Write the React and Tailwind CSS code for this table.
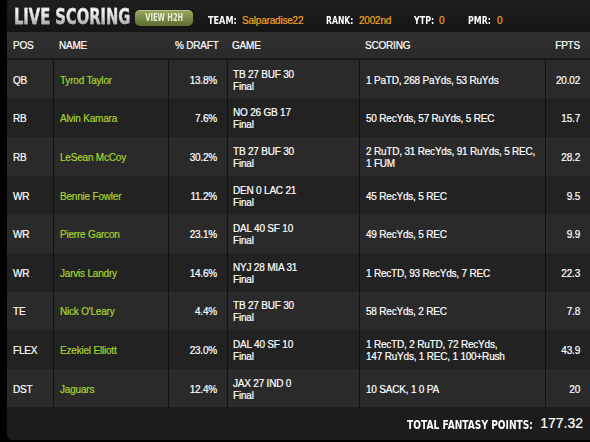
import React from "react";

const rows = [
  { pos: "QB", name: "Tyrod Taylor", draft: "13.8%", game: "TB 27 BUF 30", scoring: ["1 PaTD", "268 PaYds", "53 RuYds"], fpts: "20.02" },
  { pos: "RB", name: "Alvin Kamara", draft: "7.6%", game: "NO 26 GB 17", scoring: ["50 RecYds", "57 RuYds", "5 REC"], fpts: "15.7" },
  { pos: "RB", name: "LeSean McCoy", draft: "30.2%", game: "TB 27 BUF 30", scoring: ["2 RuTD", "31 RecYds", "91 RuYds", "5 REC", "1 FUM"], fpts: "28.2" },
  { pos: "WR", name: "Bennie Fowler", draft: "11.2%", game: "DEN 0 LAC 21", scoring: ["45 RecYds", "5 REC"], fpts: "9.5" },
  { pos: "WR", name: "Pierre Garcon", draft: "23.1%", game: "DAL 40 SF 10", scoring: ["49 RecYds", "5 REC"], fpts: "9.9" },
  { pos: "WR", name: "Jarvis Landry", draft: "14.6%", game: "NYJ 28 MIA 31", scoring: ["1 RecTD", "93 RecYds", "7 REC"], fpts: "22.3" },
  { pos: "TE", name: "Nick O'Leary", draft: "4.4%", game: "TB 27 BUF 30", scoring: ["58 RecYds", "2 REC"], fpts: "7.8" },
  { pos: "FLEX", name: "Ezekiel Elliott", draft: "23.0%", game: "DAL 40 SF 10", scoring: ["1 RecTD", "2 RuTD", "72 RecYds", "147 RuYds", "1 REC", "1 100+Rush"], fpts: "43.9" },
  { pos: "DST", name: "Jaguars", draft: "12.4%", game: "JAX 27 IND 0", scoring: ["10 SACK", "1 0 PA"], fpts: "20" },
];

// heavy condensed look: DejaVu Sans Bold squeezed horizontally
const heavy = "font-['DejaVu_Sans',sans-serif] font-bold whitespace-nowrap";
const cols = "grid grid-cols-[46px_115px_59px_132px_186px_45px]";

const App = () => {
  return (
    <div className="w-[590px] h-[442px] bg-black pl-[7px] pb-[2px] overflow-hidden font-['Liberation_Sans',Arial,sans-serif] tracking-[-0.2px]">
      <div className="h-full flex flex-col rounded-tl-[3px] rounded-bl-[5px] overflow-hidden bg-[#1b1b1b]">
        {/* title bar */}
        <div className="h-[32px] pt-[5px] flex items-center bg-gradient-to-b from-[#1f1f1f] to-[#151515] shrink-0">
          <span className="ml-[7px] w-[116px] inline-block mt-[1px]">
            <span className={heavy + " inline-block origin-left scale-x-[0.70] text-[21px] leading-none tracking-normal bg-gradient-to-b from-white via-[#dcdcdc] to-[#8c8c8c] bg-clip-text text-transparent [-webkit-text-stroke:0.4px_#bdbdbd]"}>
              LIVE SCORING
            </span>
          </span>
          <button className="ml-[5px] w-[58px] h-[16px] mt-[-2px] flex items-center justify-center rounded-[5px] bg-gradient-to-b from-[#9aab5e] to-[#5c6d30] shadow-[inset_0_1px_0_rgba(255,255,255,0.3)]">
            <span className={heavy + " inline-block scale-x-[0.67] text-[10px] leading-none tracking-normal text-[#e8eed6]"}>VIEW H2H</span>
          </button>

          <div className="ml-[15px] w-[118px] flex items-baseline">
            <span className="w-[34px] inline-block">
              <span className={heavy + " inline-block origin-left scale-x-[0.74] text-[11px] tracking-normal text-white"}>TEAM:</span>
            </span>
            <span className="text-[10px] text-[#f2a31c] [-webkit-text-stroke:0.2px_currentColor]">Salparadise22</span>
          </div>
          <div className="w-[88px] flex items-baseline">
            <span className="w-[33px] inline-block">
              <span className={heavy + " inline-block origin-left scale-x-[0.7] text-[11px] tracking-normal text-white"}>RANK:</span>
            </span>
            <span className="text-[10px] text-[#f2a31c] [-webkit-text-stroke:0.2px_currentColor]">2002nd</span>
          </div>
          <div className="w-[54px] flex items-baseline">
            <span className="w-[25px] inline-block">
              <span className={heavy + " inline-block origin-left scale-x-[0.72] text-[11px] tracking-normal text-white"}>YTP:</span>
            </span>
            <span className="text-[10px] text-[#f2a31c] [-webkit-text-stroke:0.2px_currentColor]">0</span>
          </div>
          <div className="flex items-baseline">
            <span className="w-[29px] inline-block">
              <span className={heavy + " inline-block origin-left scale-x-[0.72] text-[11px] tracking-normal text-white"}>PMR:</span>
            </span>
            <span className="text-[10px] text-[#f2a31c] [-webkit-text-stroke:0.2px_currentColor]">0</span>
          </div>
        </div>

        {/* column headings */}
        <div className={cols + " h-[28px] pt-[1px] items-center bg-gradient-to-b from-[#313131] to-[#2a2a2a] text-white text-[10px] [-webkit-text-stroke:0.2px_currentColor] border-b-2 border-[#1a1a1a] shrink-0"}>
          <div className="pl-[6px]">POS</div>
          <div className="pl-[6px]">NAME</div>
          <div className="pl-[7px] whitespace-nowrap">% DRAFT</div>
          <div className="pl-[5px]">GAME</div>
          <div className="pl-[6px]">SCORING</div>
          <div className="pr-[10px] text-right">FPTS</div>
        </div>

        {/* player rows */}
        <div className="flex flex-col">
          {rows.map((r, i) => (
            <div
              key={i}
              className={cols + " h-[38.6px] text-[10px] leading-[12px] text-white [-webkit-text-stroke:0.2px_currentColor] " + (i % 2 === 0 ? "bg-[#2a2a2a]" : "bg-[#222222]")}
            >
              <div className="pl-[6px] pt-[3px] flex items-center">{r.pos}</div>
              <div className="pl-[6px] pt-[3px] flex items-center border-l border-[#111] text-[#a6d42c]">{r.name}</div>
              <div className="pr-[10px] pt-[3px] flex items-center justify-end border-l border-[#111]">{r.draft}</div>
              <div className="pl-[5px] pt-[3px] flex flex-col justify-center border-l border-[#111]">
                <span>{r.game}</span>
                <span>Final</span>
              </div>
              <div className="pl-[6px] pr-[4px] pt-[3px] flex items-center border-l border-[#111]">
                <span>{r.scoring.map((s) => s.replace(/ /g, "\u00a0")).join(", ")}</span>
              </div>
              <div className="pr-[10px] pt-[3px] flex items-center justify-end border-l border-[#111]">{r.fpts}</div>
            </div>
          ))}
        </div>

        {/* total */}
        <div className="flex-1 flex items-center justify-end pr-[7px] bg-[#1c1c1c]">
          <span className="w-[127px] inline-block">
            <span className={heavy + " inline-block origin-left scale-x-[0.70] text-[13px] tracking-normal text-white"}>TOTAL FANTASY POINTS:</span>
          </span>
          <span className="ml-[6px] text-[14px] tracking-normal text-white [-webkit-text-stroke:0.2px_currentColor]">177.32</span>
        </div>
      </div>
    </div>
  );
};

export default App;
